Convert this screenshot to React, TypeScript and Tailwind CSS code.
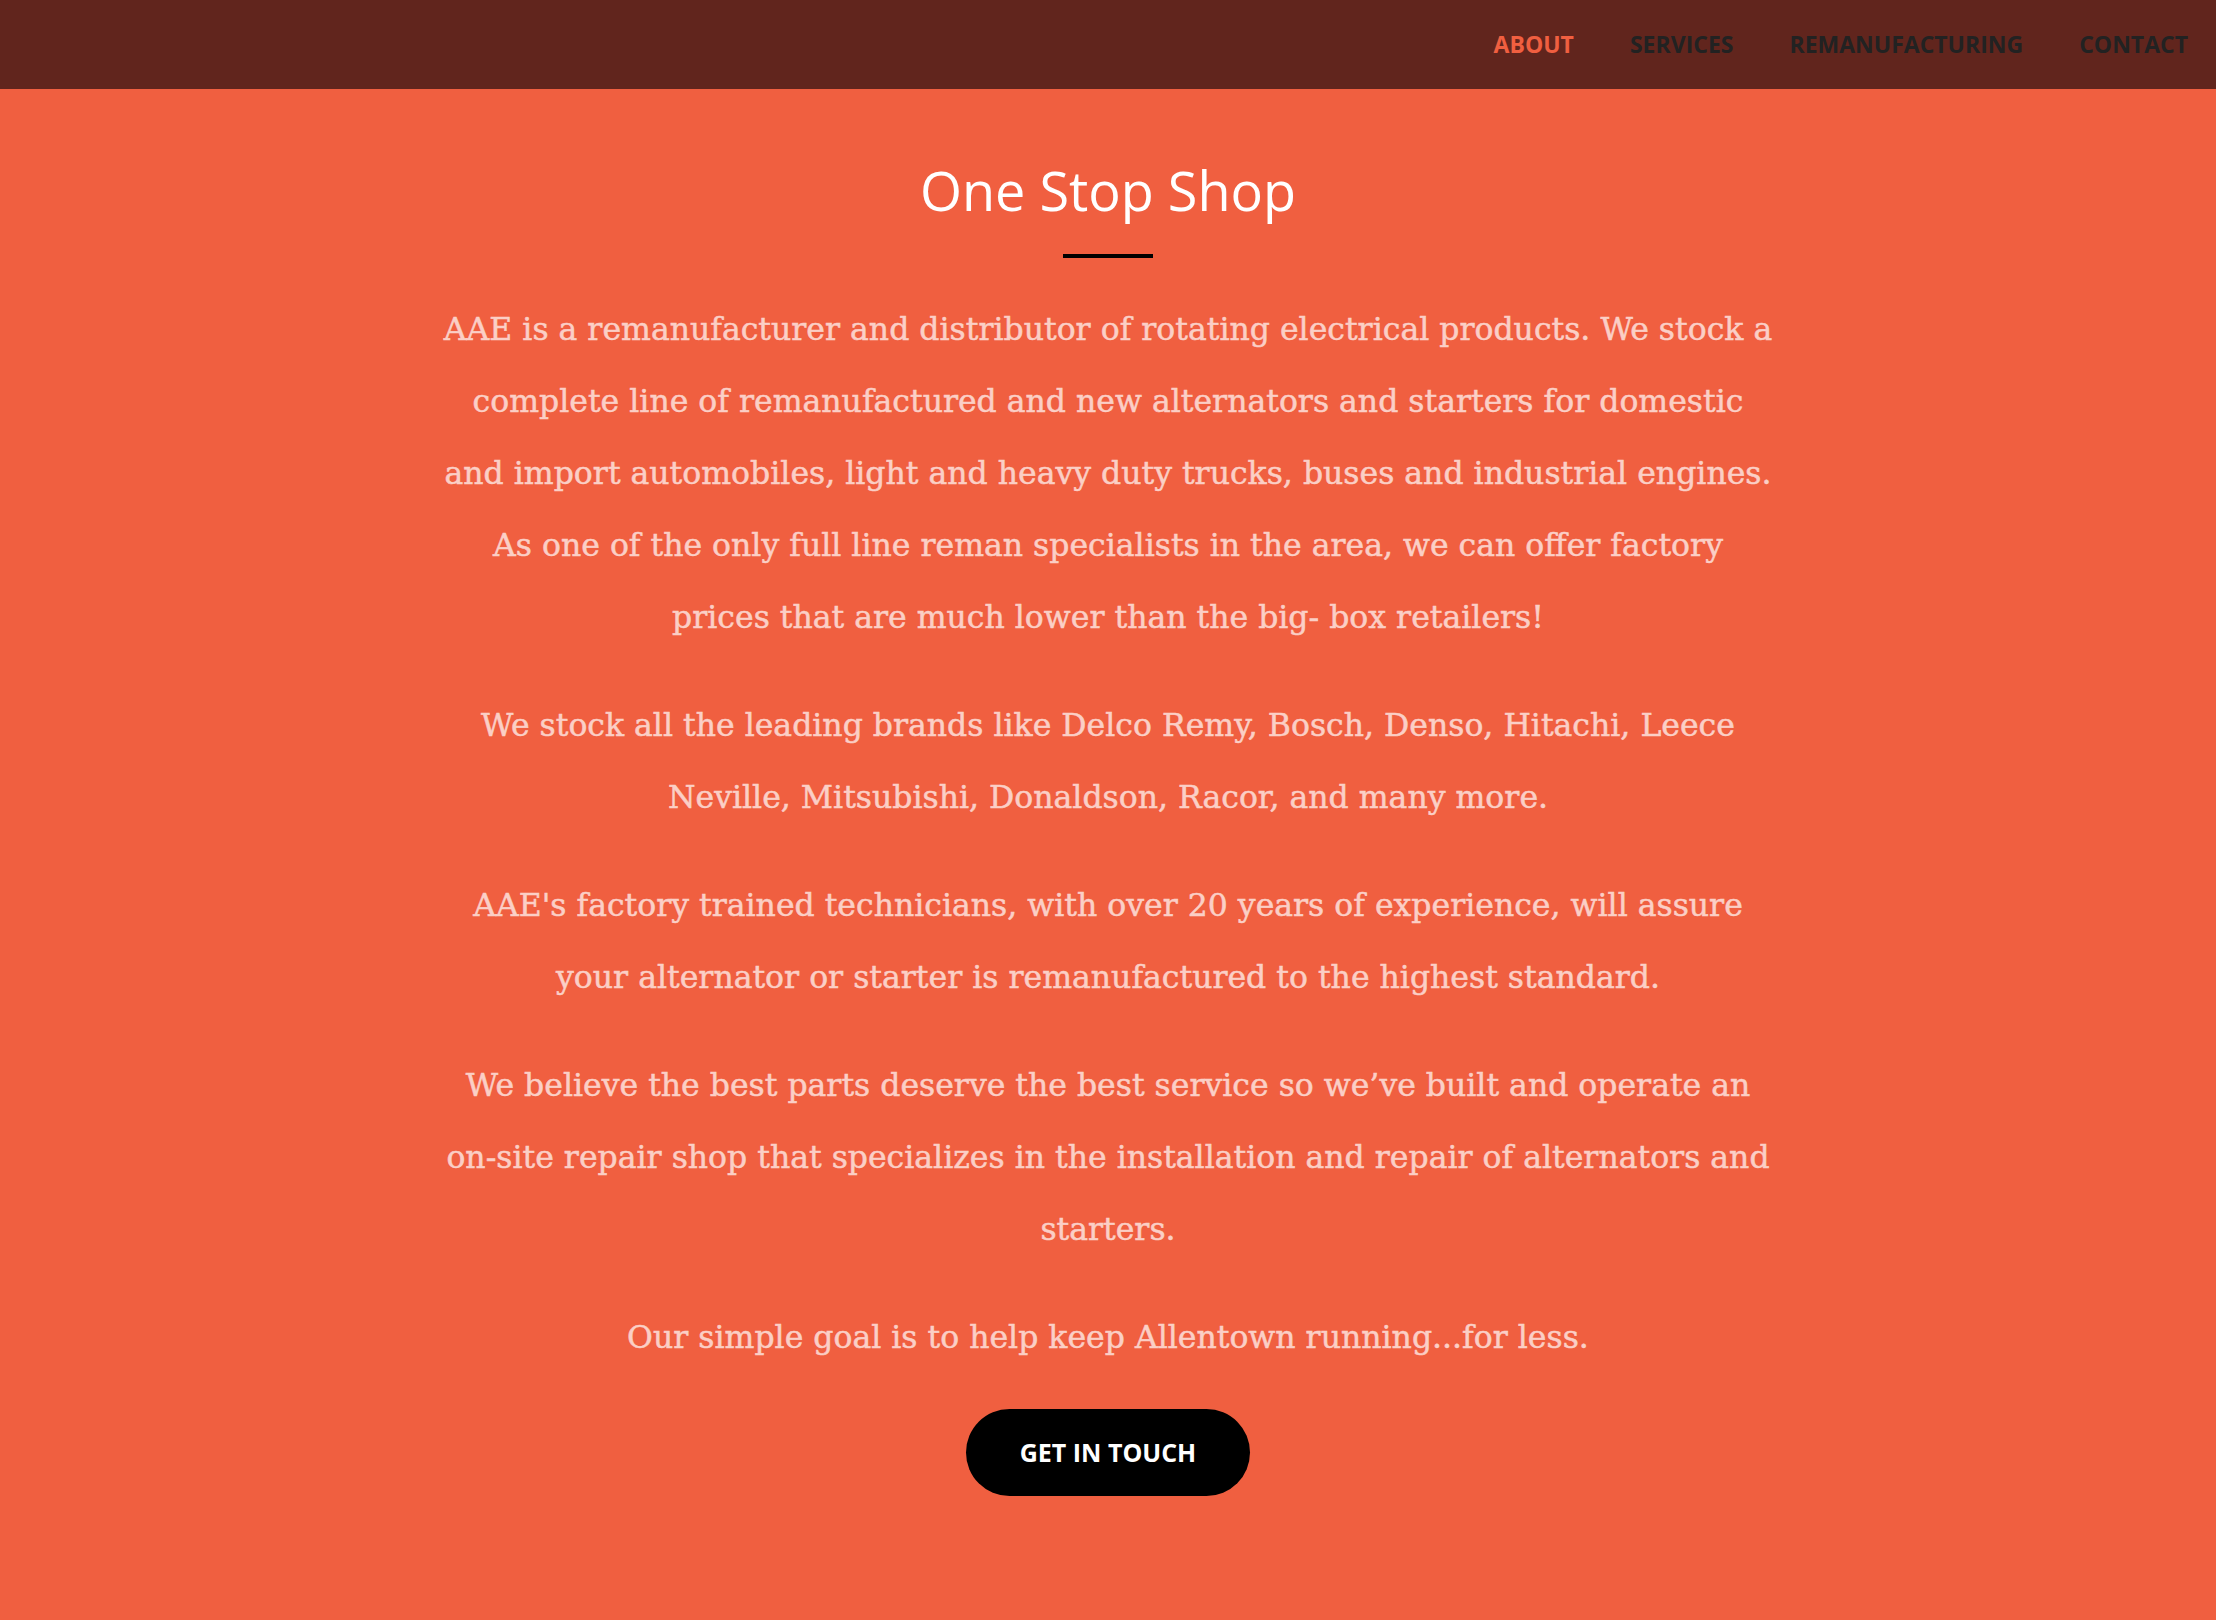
import React from "react";

const serif = { fontFamily: '"DejaVu Serif", "Liberation Serif", serif' };

export default function App() {
  const para = "mb-[36px] whitespace-nowrap";
  return (
    <div className="min-h-[1620px] bg-[#f05f40] font-['Open_Sans',sans-serif]">
      <nav className="flex h-[89px] items-center justify-end bg-[#61251d]">
        <ul className="flex items-center">
          <li className="px-[28px] text-[23px] font-bold uppercase text-[#f05f40]">About</li>
          <li className="px-[28px] text-[23px] font-bold uppercase text-[#222222]">Services</li>
          <li className="px-[28px] text-[23px] font-bold uppercase text-[#222222]">Remanufacturing</li>
          <li className="px-[28px] text-[23px] font-bold uppercase text-[#222222]">Contact</li>
        </ul>
      </nav>
      <section className="flex flex-col items-center pt-[71px]">
        <h2 className="text-[54px] leading-[60px] font-normal text-white">One Stop Shop</h2>
        <hr className="mt-[34px] w-[90px] border-t-[4px] border-black" />
        <div
          className="mt-[35px] flex flex-col items-center text-center text-[31.5px] leading-[72px] text-[#fbcfc6] [-webkit-text-stroke:0.5px_#fbcfc6]"
          style={serif}
        >
          <p className={para}>
            AAE is a remanufacturer and distributor of rotating electrical products. We stock a
            <br />
            complete line of remanufactured and new alternators and starters for domestic
            <br />
            and import automobiles, light and heavy duty trucks, buses and industrial engines.
            <br />
            As one of the only full line reman specialists in the area, we can offer factory
            <br />
            prices that are much lower than the big- box retailers!
          </p>
          <p className={para}>
            We stock all the leading brands like Delco Remy, Bosch, Denso, Hitachi, Leece
            <br />
            Neville, Mitsubishi, Donaldson, Racor, and many more.
          </p>
          <p className={para}>
            AAE's factory trained technicians, with over 20 years of experience, will assure
            <br />
            your alternator or starter is remanufactured to the highest standard.
          </p>
          <p className={para}>
            We believe the best parts deserve the best service so we’ve built and operate an
            <br />
            on-site repair shop that specializes in the installation and repair of alternators and
            <br />
            starters.
          </p>
          <p className={para}>Our simple goal is to help keep Allentown running...for less.</p>
        </div>
        <button className="flex h-[87px] w-[284px] items-center justify-center rounded-full bg-black text-[25px] font-bold uppercase text-white">
          Get in Touch
        </button>
      </section>
    </div>
  );
}
